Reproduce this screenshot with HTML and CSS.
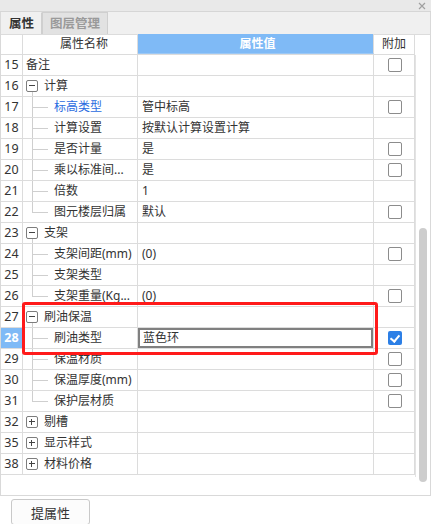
FILE: index.html
```html
<!DOCTYPE html>
<html lang="zh-CN">
<head>
  <meta charset="UTF-8" />
  <title>属性</title>
  <link rel="stylesheet" href="styles.css">
</head>
<body>

<div id="panel">
  <div class="titlebar">
    <svg class="close" width="8" height="8" viewBox="0 0 8 8"><path d="M1 1L7 7M7 1L1 7" stroke="#a0a0a0" stroke-width="1.2" fill="none"/></svg>
  </div>

  <div class="tabs">
    <div class="tab active">属性</div>
    <div class="tab">图层管理</div>
  </div>

  <div class="gridWrap">
    <div class="grid">
      <div class="row head">
        <div class="num"></div>
        <div class="name">属性名称</div>
        <div class="val">属性值</div>
        <div class="chk">附加</div>
      </div>

      <div class="row"><div class="num">15</div><div class="name root">备注</div><div class="val"></div><div class="chk"><span class="box"></span></div></div>

      <div class="row"><div class="num">16</div><div class="name group open"><span class="toggle"></span>计算</div><div class="val"></div><div class="chk"></div></div>
      <div class="row"><div class="num">17</div><div class="name child link">标高类型</div><div class="val">管中标高</div><div class="chk"><span class="box"></span></div></div>
      <div class="row"><div class="num">18</div><div class="name child">计算设置</div><div class="val">按默认计算设置计算</div><div class="chk"></div></div>
      <div class="row"><div class="num">19</div><div class="name child">是否计量</div><div class="val">是</div><div class="chk"><span class="box"></span></div></div>
      <div class="row"><div class="num">20</div><div class="name child">乘以标准间...</div><div class="val">是</div><div class="chk"><span class="box"></span></div></div>
      <div class="row"><div class="num">21</div><div class="name child">倍数</div><div class="val">1</div><div class="chk"></div></div>
      <div class="row"><div class="num">22</div><div class="name child last">图元楼层归属</div><div class="val">默认</div><div class="chk"><span class="box"></span></div></div>

      <div class="row"><div class="num">23</div><div class="name group open"><span class="toggle"></span>支架</div><div class="val"></div><div class="chk"></div></div>
      <div class="row"><div class="num">24</div><div class="name child">支架间距(mm)</div><div class="val">(0)</div><div class="chk"><span class="box"></span></div></div>
      <div class="row"><div class="num">25</div><div class="name child">支架类型</div><div class="val"></div><div class="chk"></div></div>
      <div class="row"><div class="num">26</div><div class="name child last">支架重量(Kg...</div><div class="val">(0)</div><div class="chk"><span class="box"></span></div></div>

      <div class="row"><div class="num">27</div><div class="name group open"><span class="toggle"></span>刷油保温</div><div class="val"></div><div class="chk"></div></div>
      <div class="row selected"><div class="num">28</div><div class="name child">刷油类型</div><div class="val editing">蓝色环</div><div class="chk"><span class="box checked"></span></div></div>
      <div class="row"><div class="num">29</div><div class="name child">保温材质</div><div class="val"></div><div class="chk"><span class="box"></span></div></div>
      <div class="row"><div class="num">30</div><div class="name child">保温厚度(mm)</div><div class="val"></div><div class="chk"><span class="box"></span></div></div>
      <div class="row"><div class="num">31</div><div class="name child last">保护层材质</div><div class="val"></div><div class="chk"><span class="box"></span></div></div>

      <div class="row"><div class="num">32</div><div class="name group"><span class="toggle"></span>剔槽</div><div class="val"></div><div class="chk"></div></div>
      <div class="row"><div class="num">35</div><div class="name group"><span class="toggle"></span>显示样式</div><div class="val"></div><div class="chk"></div></div>
      <div class="row"><div class="num">38</div><div class="name group"><span class="toggle"></span>材料价格</div><div class="val"></div><div class="chk"></div></div>

      <!-- 红框标注 -->
      <div class="mark"></div>
    </div>

    <div class="scroll"><div class="thumb"></div></div>
  </div>
</div>

<div class="footer">
  <button class="btn">提属性</button>
</div>

</body>
</html>
```

FILE: styles.css
```css
body, html {
  margin: 0;
  background: #fff;
  font-family: "Noto Sans", "Noto Sans CJK SC", sans-serif;
  font-size: 12px;
  color: #333;
}

#panel {
  width: 431px;
  box-sizing: border-box;
  border-left: 1px solid #d9d9d9;
  border-right: 1px solid #d9d9d9;
  border-bottom: 1px solid #d9d9d9;
}

.titlebar {
  height: 11px;
  margin: 0 -1px;
  background: #e9e9e9;
  border-bottom: 1px solid #d6d6d6;
  position: relative;
}

.close {
  position: absolute;
  right: 5px;
  top: 2px;
}

.tabs {
  display: flex;
  height: 22px;
  background: #f0f0f0;
}

.tab {
  padding: 0 7px;
  line-height: 21px;
  font-size: 12.5px;
  color: #9a9a9a;
  background: #e2e2e2;
  border: 1px solid #cfcfcf;
  border-bottom: none;
  font-weight: bold;
}

.tab.active {
  color: #333;
  background: #f0f0f0;
  border-color: #f0f0f0 #cfcfcf #f0f0f0 #f0f0f0;
}

.gridWrap {
  display: flex;
  height: 460px;
  border-top: 1px solid #dcdcdc;
}

.grid {
  position: relative;
  width: 414px;
}

.row {
  display: grid;
  grid-template-columns: 22px 115px 236px 41px;
  height: 21px;
  box-sizing: border-box;
  border-bottom: 1px solid #dcdcdc;
}

.row > div {
  border-right: 1px solid #dcdcdc;
  line-height: 20px;
  white-space: nowrap;
  overflow: hidden;
  position: relative;
}

.head {
  margin-top: -1px;
  height: 21px;
}

.head .name {
  text-align: center;
  padding-left: 8px;
}

.head .val {
  background: #7fbaf6;
  border-bottom: 1px solid #9cc8f5;
  color: #fff;
  font-weight: bold;
  text-align: center;
}

.head .chk {
  text-align: center;
}

.num {
  text-align: center;
  font-size: 12.5px;
}

.val {
  padding-left: 4px;
}

.chk {
  display: flex;
  justify-content: center;
  align-items: center;
}

.box {
  width: 12px;
  height: 12px;
  border: 1px solid #8c8c8c;
  border-radius: 2px;
  margin-left: 2px;
}

.box.checked {
  width: 14px;
  height: 14px;
  border: none;
  background: #2c7fe6;
  position: relative;
}

.box.checked::after {
  content: "";
  position: absolute;
  left: 4px;
  top: 2px;
  width: 4px;
  height: 7px;
  border: solid #fff;
  border-width: 0 2px 2px 0;
  transform: rotate(40deg);
}

/* 树形 */
.name.root {
  padding-left: 3px;
}

.name.group {
  padding-left: 21px;
}

.name.child {
  padding-left: 31px;
}

.name.link {
  color: #2a6be0;
}

.name.child::before {
  content: "";
  position: absolute;
  left: 9px;
  top: 0;
  bottom: 0;
  border-left: 1px solid #cfcfcf;
}

.name.child.last::before {
  bottom: 50%;
}

.name.child::after {
  content: "";
  position: absolute;
  left: 9px;
  top: 10px;
  width: 16px;
  border-top: 1px solid #cfcfcf;
}

.name.group.open::before {
  content: "";
  position: absolute;
  left: 9px;
  top: 15px;
  bottom: 0;
  border-left: 1px solid #cfcfcf;
}

.toggle {
  position: absolute;
  left: 3px;
  top: 4px;
  width: 10px;
  height: 10px;
  border: 1px solid #7d7d7d;
  border-radius: 2px;
  background: #fff;
}

.toggle::before {
  content: "";
  position: absolute;
  left: 2px;
  top: 4px;
  width: 6px;
  border-top: 1px solid #444;
}

.group:not(.open) .toggle::after {
  content: "";
  position: absolute;
  left: 4px;
  top: 2px;
  height: 6px;
  border-left: 1px solid #444;
}

.selected .num {
  background: #7fbaf6;
  color: #fff;
  font-weight: bold;
}

.val.editing {
  box-shadow: inset 0 0 0 2px #808080;
  padding-left: 5px;
}

.mark {
  position: absolute;
  left: 21px;
  top: 267px;
  width: 356px;
  height: 53px;
  box-sizing: border-box;
  border: 3px solid #ff1a1a;
  border-radius: 3px;
}

.scroll {
  flex: 1;
  border-left: 1px solid #e3e3e3;
  margin-top: 20px;
  margin-bottom: 18px;
  display: flex;
  justify-content: center;
}

.thumb {
  width: 8px;
  height: 254px;
  margin-top: 173px;
  background: #cdcdcd;
  border-radius: 4px;
}

.footer {
  padding: 3px 11px;
}

.btn {
  width: 79px;
  height: 26px;
  font-family: inherit;
  font-size: 13px;
  color: #333;
  background: #fcfcfc;
  border: 1px solid #c9c9c9;
  border-radius: 3px;
}
```
